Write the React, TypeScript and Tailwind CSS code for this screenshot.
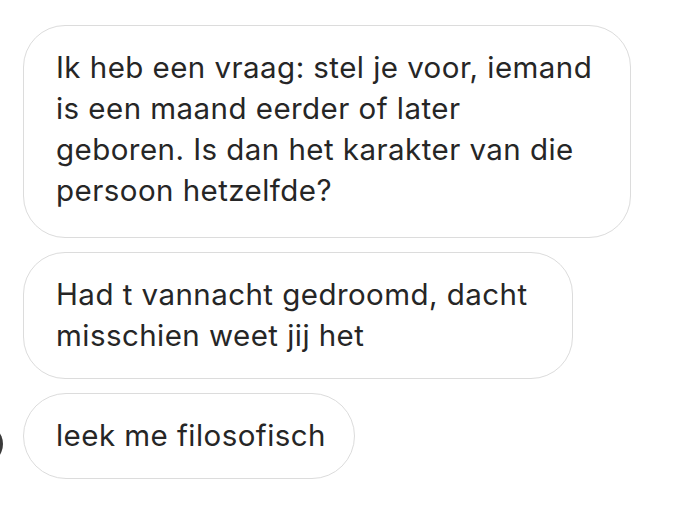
import React from 'react';

type Bubble = {
  lines: string[];
  width: string;
  padding: string;
  radius: string;
};

const bubbles: Bubble[] = [
  {
    lines: [
      'Ik heb een vraag: stel je voor, iemand',
      'is een maand eerder of later',
      'geboren. Is dan het karakter van die',
      'persoon hetzelfde?',
    ],
    width: 'w-[608px]',
    padding: 'pt-[21px] pb-[26px]',
    radius: 'rounded-[42px]',
  },
  {
    lines: ['Had t vannacht gedroomd, dacht', 'misschien weet jij het'],
    width: 'w-[550px]',
    padding: 'pt-[21px] pb-[22px]',
    radius: 'rounded-[42px]',
  },
];

const MessageBubble: React.FC<{ bubble: Bubble }> = ({ bubble }) => (
  <div
    className={`${bubble.width} ${bubble.padding} ${bubble.radius} border border-[#dcdcdc] bg-white pl-[32px] pr-4`}
  >
    {bubble.lines.map((line, i) => (
      <div key={i} className="whitespace-nowrap">
        {line}
      </div>
    ))}
  </div>
);

const App: React.FC = () => {
  return (
    <div
      className="h-[508px] w-[691px] overflow-hidden bg-white pl-[23px] pt-[25px] text-[29.5px] leading-[41px] tracking-[0.45px] text-[#262626]"
      style={{ fontFamily: 'Inter, "Noto Sans", sans-serif' }}
    >
      <div className="flex flex-col gap-[14px]">
        {bubbles.map((b, i) => (
          <MessageBubble key={i} bubble={b} />
        ))}
        <div className="flex items-center">
          <div className="-ml-[60px] mr-[20px] mt-[16px] h-[40px] w-[40px] shrink-0 rounded-full bg-[#3a3a3a]" />
          <div className="w-[332px] whitespace-nowrap rounded-full border border-[#dcdcdc] bg-white pt-[21px] pb-[22px] pl-[32px]">
            leek me filosofisch
          </div>
        </div>
      </div>
    </div>
  );
};

export default App;
